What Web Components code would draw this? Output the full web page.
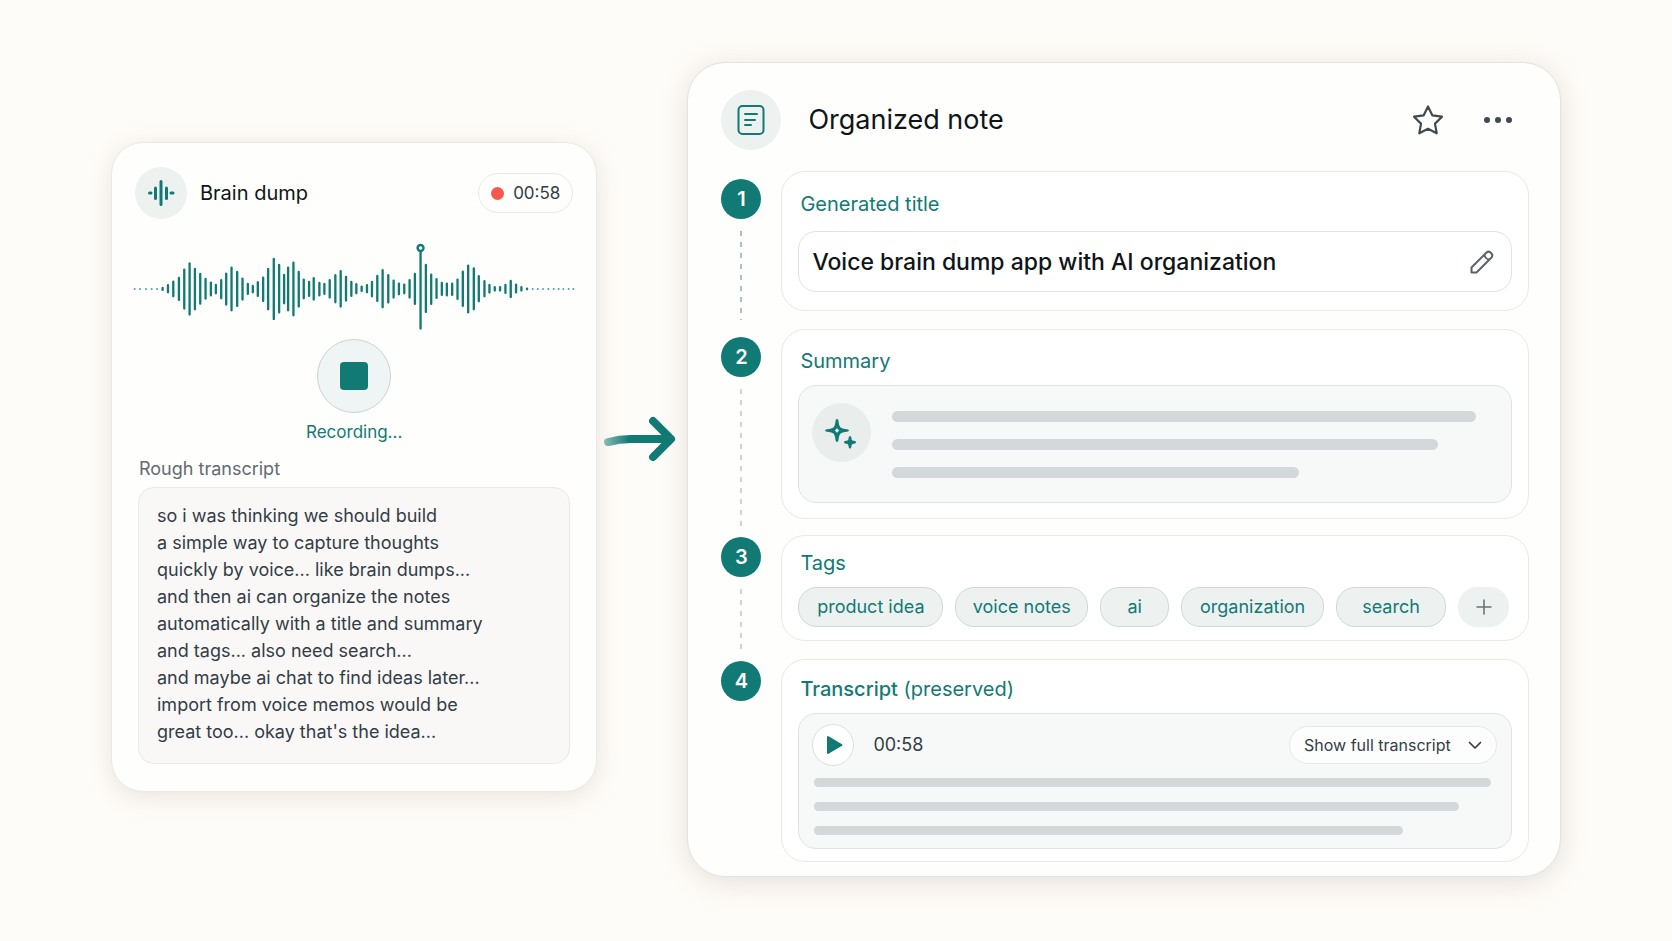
<!DOCTYPE html>
<html lang="en">
<head>
<meta charset="utf-8">
<meta name="viewport" content="width=device-width, initial-scale=1">
<title>Brain dump to organized note</title>
<style>
  :root {
    --teal: #117a75;
    --ink: #0f1519;
    --slate: #333d47;
    --muted: #626a72;
    --paper: #fefefc;
    --tint: #edf2f1;
    --wash: #f7f9f8;
    --bar: #d4d8db;
    --line: #ece8e4;
    --line-cool: #dfe3e2;
  }
  body {
    margin: 0;
    min-height: 100vh;
    background: #fefcf8;
    color: var(--ink);
    font-family: Inter, "Liberation Sans", sans-serif;
  }
</style>
</head>
<body>
<brain-flow>
  <brain-dump slot="source" heading="Brain dump" time="00:58">
    so i was thinking we should build<br>
    a simple way to capture thoughts<br>
    quickly by voice... like brain dumps...<br>
    and then ai can organize the notes<br>
    automatically with a title and summary<br>
    and tags... also need search...<br>
    and maybe ai chat to find ideas later...<br>
    import from voice memos would be<br>
    great too... okay that's the idea...
  </brain-dump>
  <flow-arrow slot="arrow"></flow-arrow>
  <organized-note slot="result" heading="Organized note">
    <note-step number="1" strong>
      <span slot="label">Generated title</span>
      <title-field></title-field>
    </note-step>
    <note-step number="2">
      <span slot="label">Summary</span>
      <summary-box></summary-box>
    </note-step>
    <note-step number="3" compact>
      <span slot="label">Tags</span>
      <tag-list tags="product idea,voice notes,ai,organization,search"></tag-list>
    </note-step>
    <note-step number="4" compact last>
      <span slot="label"><span style="font-weight:500">Transcript</span> (preserved)</span>
      <transcript-box time="00:58"></transcript-box>
    </note-step>
  </organized-note>
</brain-flow>

<script>
  const define = (name, render) => customElements.define(name, class extends HTMLElement {
    constructor() {
      super();
      this.attachShadow({ mode: 'open' });
    }
    connectedCallback() {
      if (this.shadowRoot.childNodes.length) return;
      const t = document.createElement('template');
      t.innerHTML = '<style>*{box-sizing:border-box}button{font:inherit;color:inherit;background:none;border:0;padding:0;margin:0;cursor:pointer}svg{display:block}</style>' + render(this);
      this.shadowRoot.append(t.content.cloneNode(true));
    }
  });

  define('brain-flow', () => `
    <style>
      :host { display: block; }
      main {
        display: grid;
        grid-template-columns: 486fr 90fr 873fr;
        align-items: start;
        padding-block: 62px;
        padding-inline: calc(100% * 111 / 1672);
      }
      .source { padding-top: 80px; }
      .arrow { padding-top: 352px; }
    </style>
    <main>
      <div class="source"><slot name="source"></slot></div>
      <div class="arrow"><slot name="arrow"></slot></div>
      <slot name="result"></slot>
    </main>`);

  define('flow-arrow', () => `
    <style>:host { display: block; color: var(--teal); } svg { width: 100%; }</style>
    <svg viewBox="0 0 90 50" fill="none" stroke-linecap="round" stroke-linejoin="round" role="img" aria-label="becomes">
      <defs><linearGradient id="fade" gradientUnits="userSpaceOnUse" x1="7" y1="0" x2="32" y2="0">
        <stop offset="0" stop-color="#8abbb7"/><stop offset="1" stop-color="#117a75"/>
      </linearGradient></defs>
      <path d="M11 28Q22 25 34 25H72" stroke="url(#fade)" stroke-width="8"/>
      <path d="M56 7L74 25L56 43" stroke="currentColor" stroke-width="8"/>
    </svg>`);

  define('round-icon', () => `
    <style>
      :host { display: grid; place-items: center; flex: none; border-radius: 50%; background: var(--tint); color: var(--teal); }
    </style><slot></slot>`);

  /* Each entry is x, top, bottom of one bar. */
  const BARS = [
    [188,472,484],[204,464,491],[220,453,503],[237,442,514],[253,417,540],[269,398,558],[285,415,542],[301,430,525],
    [317,445,510],[333,456,500],[348,463,494],[364,449,509],[379,429,528],[395,411,545],[412,424,532],[428,444,513],
    [444,460,496],[459,466,491],[474,455,502],[490,441,517],[505,415,542],[522,385,571],[538,403,551],[553,433,524],
    [565,411,545],[581,396,560],[597,424,534],[612,447,509],[628,454,502],[642,443,513],[659,457,500],[674,460,496],
    [690,449,507],[707,434,521],[723,422,534],[739,439,516],[755,454,502],[770,461,494],[786,468,487],[802,464,491],
    [817,454,503],[833,436,517],[849,419,536],[866,434,522],[882,450,507],[898,459,497],[914,462,494],[930,449,507],
    [946,430,526],[963,365,600],[979,403,550],[995,432,526],[1011,446,508],[1027,457,499],[1042,459,500],[1058,459,499],
    [1074,447,511],[1090,423,532],[1106,405,551],[1123,413,542],[1138,437,518],[1155,452,503],[1170,463,492],
    [1186,470,486],[1202,470,486],[1218,463,493],[1234,451,505],[1250,462,492],[1266,470,486],[1283,474,482]];
  const DOTS = [104,120,138,155,171,1300,1315,1331,1347,1363,1378,1392,1408,1422];

  define('wave-form', () => `
    <style>:host { display: block; } svg { width: 100%; }</style>
    <svg viewBox="99 340 1329 264" fill="none" stroke="#117a75" stroke-linecap="round" stroke-width="7" role="img" aria-label="Waveform">
      <path d="${BARS.map(([x, a, b]) => `M${x} ${a + 3}V${b - 3}`).join('')}"/>
      <path d="${DOTS.map(x => `M${x} 478h.1`).join('')}" stroke-opacity=".7" stroke-width="6"/>
      <circle cx="963" cy="355" r="9" fill="#fefefc"/>
    </svg>`);

  define('brain-dump', el => `
    <style>
      :host { display: block; }
      section {
        padding: 24px 23px 27px;
        border: 1px solid var(--line);
        border-radius: 32px;
        background: var(--paper);
        box-shadow: 0 5px 24px rgba(120, 90, 70, .15);
      }
      header { display: flex; align-items: center; gap: 13px; }
      round-icon { width: 52px; height: 52px; }
      h2 { margin: 0; flex: 1; font-size: 20px; line-height: 28px; font-weight: 400; }
      .time {
        display: flex; align-items: center; gap: 9px; height: 40px; padding: 0 12px;
        border: 1px solid var(--line); border-radius: 20px; font-size: 17px; color: var(--slate);
      }
      .time::before { content: ""; width: 13px; height: 13px; border-radius: 50%; background: #f9564f; }
      wave-form { margin: 24px -2px 0; }
      .record { display: flex; flex-direction: column; align-items: center; gap: 7px; margin-top: 8px; }
      .stop {
        display: grid; place-items: center; width: 74px; height: 74px;
        border: 1px solid #cbd3d3; border-radius: 50%; background: #eff4f4;
      }
      .stop::before { content: ""; width: 28px; height: 28px; border-radius: 4px; background: var(--teal); }
      .status { font-size: 17px; line-height: 24px; color: var(--teal); }
      h3 { margin: 13px 4px 6px; font-size: 18px; line-height: 24px; font-weight: 400; color: var(--muted); }
      p {
        margin: 0 3px; padding: 14px 18px 18px; border: 1px solid var(--line); border-radius: 16px;
        background: #faf8f6; font-size: 18px; line-height: 27px; color: var(--slate);
      }
    </style>
    <section>
      <header>
        <round-icon>
          <svg width="28" height="28" viewBox="0 0 28 28" fill="none" stroke="currentColor" stroke-width="3" stroke-linecap="round">
            <path d="M2.500 14h1.500M8.500 9v10.500M14 2.500v23M19.500 9v10.500M24 14h2"/>
          </svg>
        </round-icon>
        <h2>${el.getAttribute('heading')}</h2>
        <div class="time">${el.getAttribute('time')}</div>
      </header>
      <wave-form></wave-form>
      <div class="record">
        <button class="stop" type="button" aria-label="Stop recording"></button>
        <div class="status" role="status">Recording...</div>
      </div>
      <h3>Rough transcript</h3>
      <p><slot></slot></p>
    </section>`);

  define('organized-note', el => `
    <style>
      :host { display: block; }
      article {
        padding: 27px 31px 14px 33px;
        border: 1px solid var(--line-cool);
        border-radius: 38px;
        background: var(--paper);
        box-shadow: 0 5px 28px rgba(120, 90, 70, .18);
      }
      header { display: flex; align-items: center; padding-right: 15px; margin-bottom: 21px; color: #414952; }
      round-icon { width: 60px; height: 60px; margin-right: 27px; }
      h1 { margin: 0; flex: 1; font-size: 27px; line-height: 36px; font-weight: 400; color: var(--ink); }
      button + button { margin-left: 38px; }
    </style>
    <article>
      <header>
        <round-icon>
          <svg width="30" height="32" viewBox="0 0 30 32" fill="none" stroke="currentColor" stroke-width="2" stroke-linecap="round">
            <rect x="2.500" y="2" width="25" height="28" rx="4"/>
            <path d="M9 10h12M9 16h10M9 21h6"/>
          </svg>
        </round-icon>
        <h1>${el.getAttribute('heading')}</h1>
        <button type="button" aria-label="Favorite">
          <svg width="32" height="32" viewBox="0 0 32 32" fill="none" stroke="currentColor" stroke-width="2.200" stroke-linejoin="round">
            <path d="M16 2.500L20.300 11.300L30 12.700L23 19.600L24.700 29.300L16 24.800L7.300 29.300L9 19.600L2 12.700L11.700 11.300Z"/>
          </svg>
        </button>
        <button type="button" aria-label="More">
          <svg width="32" height="32" viewBox="0 0 32 32" fill="currentColor">
            <circle cx="5" cy="16" r="3"/><circle cx="16" cy="16" r="3"/><circle cx="27" cy="16" r="3"/>
          </svg>
        </button>
      </header>
      <slot></slot>
    </article>`);

  define('note-step', el => `
    <style>
      :host { display: grid; grid-template-columns: 40px minmax(0, 1fr); column-gap: 20px; }
      .rail { display: flex; flex-direction: column; align-items: center; padding-top: 8px; }
      :host([compact]) .rail { padding-top: 2px; }
      .badge {
        display: grid; place-items: center; flex: none; width: 40px; height: 40px; border-radius: 50%;
        background: var(--teal); color: #fff; font-size: 20px; font-weight: 600;
      }
      .dots {
        flex: 1; width: 2px; margin: 12px 0 9px;
        background: repeating-linear-gradient(#cdd3d8 0 5px, transparent 5px 11px);
      }
      :host([strong]) .dots { background: repeating-linear-gradient(#a3c4c5 0 5px, transparent 5px 11px); }
      section {
        margin-bottom: 16px; padding: 17px 16px 15px; border: 1px solid var(--line);
        border-radius: 24px; background: #fff;
      }
      h2 { margin: 0 2px 10px; font-size: 20px; line-height: 28px; font-weight: 400; color: var(--teal); }
      :host([strong]) section { margin-bottom: 18px; padding: 18px 16px; }
      :host([strong]) h2 { margin-bottom: 13px; }
      :host([compact]) section { margin-bottom: 18px; padding: 13px 16px; }
      :host([last]) section { margin-bottom: 0; padding-top: 15px; padding-bottom: 12px; }
    </style>
    <div class="rail"><div class="badge">${el.getAttribute('number')}</div>${el.hasAttribute('last') ? '' : '<div class="dots"></div>'}</div>
    <section><h2><slot name="label"></slot></h2><slot></slot></section>`);

  define('title-field', () => `
    <style>
      :host { display: block; }
      div {
        display: flex; align-items: center; height: 61px; padding: 0 17px 0 13px;
        border: 1px solid var(--line-cool); border-radius: 18px;
      }
      input {
        flex: 1; min-width: 0; padding: 0; border: 0; outline: 0; background: none;
        font: 500 23px/32px Inter, "Liberation Sans", sans-serif; color: var(--ink);
      }
      button { color: #5a626a; }
    </style>
    <div>
      <input aria-label="Generated title" value="Voice brain dump app with AI organization">
      <button type="button" aria-label="Edit title">
        <svg width="24" height="24" viewBox="0 0 24 24" fill="none" stroke="currentColor" stroke-width="2" stroke-linejoin="round">
          <path d="M1.500 22.500V17.500L16.500 2.500Q18.500 .800 20.500 2.500L21.500 3.500Q23.200 5.500 21.500 7.500L6.500 22.500ZM14.500 4.500Q15 9 19.500 9.500"/>
        </svg>
      </button>
    </div>`);

  define('skeleton-lines', el => `
    <style>
      :host { display: flex; flex-direction: column; }
      i { display: block; height: var(--thick); border-radius: 6px; background: var(--bar); }
    </style>
    ${el.getAttribute('widths').split(',').map(w => `<i style="width:${w}%"></i>`).join('')}`);

  define('summary-box', () => `
    <style>
      :host {
        display: flex; gap: 21px; height: 118px; padding: 17px 35px 0 13px; box-sizing: border-box;
        border: 1px solid var(--line-cool); border-radius: 18px; background: var(--wash);
      }
      round-icon { width: 59px; height: 59px; background: #e9eeed; }
      skeleton-lines { --thick: 11px; flex: 1; gap: 17px; padding-top: 8px; }
    </style>
    <round-icon>
      <svg width="34" height="34" viewBox="0 0 34 34">
        <path fill="currentColor" fill-rule="evenodd" d="M12 3Q13.300 3 13.500 5Q14 11 16.500 12Q18 13 22 13.200Q24 13.400 24 14.500Q24 15.600 22 15.800Q18 16 16.500 17Q14 18 13.500 24Q13.300 26 12 26Q10.700 26 10.500 24Q10 18 7.500 17Q6 16 2 15.800Q0 15.600 0 14.500Q0 13.400 2 13.200Q6 13 7.500 12Q10 11 10.500 5Q10.700 3 12 3ZM12 12.200L9.800 14.500L12 16.800L14.200 14.500Z"/>
        <path fill="currentColor" d="M25 20Q26.200 20 26.300 21.500Q26.500 24 27.500 24.500L30 25Q31 25.300 31 26.200Q31 27.100 30 27.400L27.500 28Q26.500 28.500 26.300 31Q26.200 32.500 25 32.500Q23.800 32.500 23.700 31Q23.500 28.500 22.500 28L20 27.400Q19 27.100 19 26.200Q19 25.300 20 25L22.500 24.500Q23.500 24 23.700 21.500Q23.800 20 25 20Z"/>
      </svg>
    </round-icon>
    <skeleton-lines widths="100,93.500,69.700"></skeleton-lines>`);

  define('tag-list', el => `
    <style>
      :host { display: block; padding-right: 3px; }
      ul {
        display: grid; grid-template-columns: 145fr 133fr 69fr 143fr 110fr 51fr; gap: 12px;
        margin: 0; padding: 0; list-style: none; text-align: center;
      }
      li {
        height: 40px; border: 1px solid #d0d8d7; border-radius: 19px; background: var(--tint);
        font-size: 18px; line-height: 38px; color: var(--teal); white-space: nowrap;
      }
      li:last-child { border-color: var(--tint); color: #6c7376; }
      button { display: grid; place-items: center; width: 100%; height: 100%; }
    </style>
    <ul>
      ${el.getAttribute('tags').split(',').map(t => `<li>${t}</li>`).join('')}
      <li><button type="button" aria-label="Add tag">
        <svg width="16" height="16" viewBox="0 0 16 16" stroke="currentColor" stroke-width="1.600" stroke-linecap="round"><path d="M8 1v14M1 8h14"/></svg>
      </button></li>
    </ul>`);

  define('transcript-box', el => `
    <style>
      :host {
        display: block; height: 136px; padding: 10px 14px 0 13px; box-sizing: border-box;
        border: 1px solid var(--line-cool); border-radius: 18px; background: var(--wash); color: var(--slate);
      }
      .bar { display: flex; align-items: center; }
      .play {
        display: grid; place-items: center; width: 42px; height: 42px;
        border: 1px solid #dcdfdf; border-radius: 50%; background: #fff; color: var(--teal);
      }
      .play svg { margin-left: 2px; }
      time { flex: 1; margin-left: 19px; font-size: 18px; line-height: 24px; }
      .show {
        display: flex; align-items: center; justify-content: space-between; width: 208px; height: 38px; padding: 0 14px;
        border: 1px solid #e6e9e8; border-radius: 19px; background: #fcfdfc; font-size: 16px;
      }
      skeleton-lines { --thick: 9px; gap: 15px; margin: 12px 6px 0 2px; }
    </style>
    <div class="bar">
      <button class="play" type="button" aria-label="Play">
        <svg width="20" height="22" viewBox="0 0 20 22" fill="currentColor" stroke="currentColor" stroke-width="2" stroke-linejoin="round"><path d="M4 3V19L17.500 11Z"/></svg>
      </button>
      <time>${el.getAttribute('time')}</time>
      <button class="show" type="button" aria-expanded="false">Show full transcript
        <svg width="14" height="9" viewBox="0 0 14 9" fill="none" stroke="currentColor" stroke-width="1.700" stroke-linecap="round" stroke-linejoin="round"><path d="M1.500 1.500L7 7L12.500 1.500"/></svg>
      </button>
    </div>
    <skeleton-lines widths="100,95.300,87"></skeleton-lines>`);
</script>
</body>
</html>
